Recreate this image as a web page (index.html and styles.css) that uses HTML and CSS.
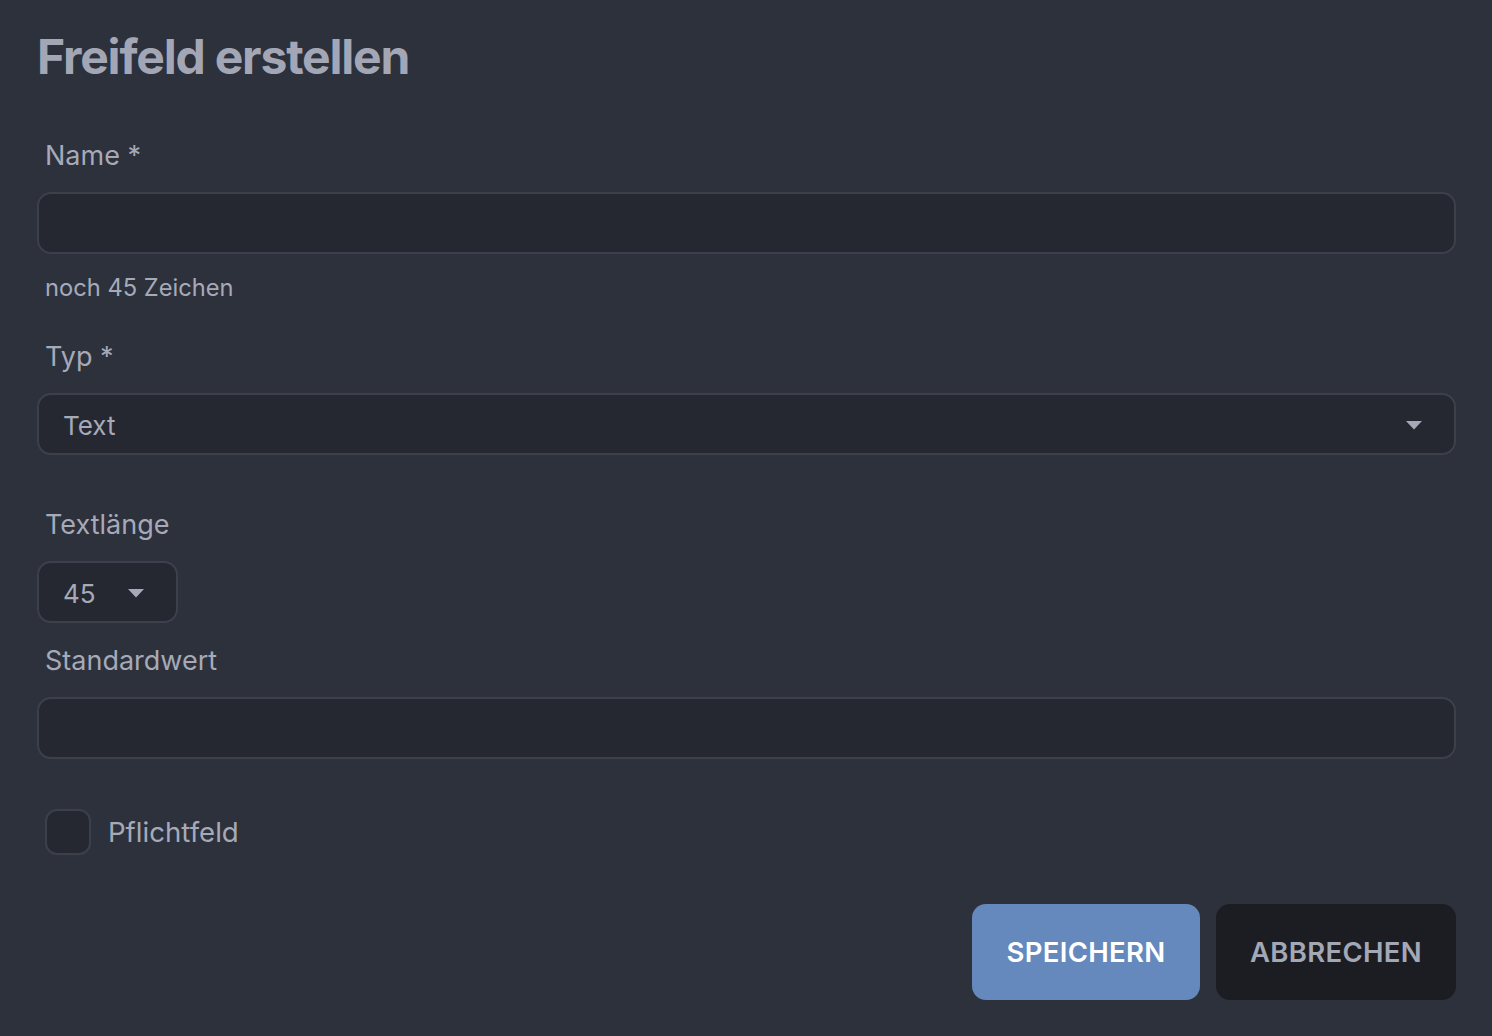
FILE: index.html
```html
<!DOCTYPE html>
<html lang="de">
<head>
<meta charset="utf-8">
<title>Freifeld erstellen</title>
<link rel="stylesheet" href="styles.css">
</head>
<body>
<main class="dialog">
  <h1 class="title">Freifeld erstellen</h1>

  <div class="field field-name">
    <label class="label">Name *</label>
    <div class="input"></div>
    <div class="helper">noch 45 Zeichen</div>
  </div>

  <div class="field field-typ">
    <label class="label">Typ *</label>
    <div class="input select">
      <span class="value">Text</span>
      <svg class="caret" width="16" height="9" viewBox="0 0 16 9"><path d="M0 0H16L8 8.5Z" fill="currentColor"/></svg>
    </div>
  </div>

  <div class="field field-len">
    <label class="label">Textlänge</label>
    <div class="input select small">
      <span class="value">45</span>
      <svg class="caret" width="16" height="9" viewBox="0 0 16 9"><path d="M0 0H16L8 8.5Z" fill="currentColor"/></svg>
    </div>
  </div>

  <div class="field field-std">
    <label class="label">Standardwert</label>
    <div class="input"></div>
  </div>

  <div class="check-row">
    <span class="checkbox"></span>
    <span class="check-label">Pflichtfeld</span>
  </div>

  <div class="actions">
    <button class="btn btn-primary">SPEICHERN</button>
    <button class="btn btn-secondary">ABBRECHEN</button>
  </div>
</main>
</body>
</html>
```
FILE: styles.css
```css
html, body {
  margin: 0;
  padding: 0;
  background: #2d313c;
}
body {
  font-family: Inter, "Noto Sans", "Liberation Sans", sans-serif;
  color: #a6aab8;
}
.dialog {
  padding: 28px 36px 0 37px;
}
.title {
  margin: 0;
  font-size: 48px;
  line-height: 58px;
  font-weight: 700;
  color: #a3a7b5;
  letter-spacing: -1.2px;
}
.field {
  display: flex;
  flex-direction: column;
}
.field-name { margin-top: 54px; }
.field-typ { margin-top: 39px; }
.field-len { margin-top: 54px; }
.field-std { margin-top: 22px; }
.label {
  display: block;
  padding-left: 8px;
  font-size: 27px;
  line-height: 32px;
  color: #a6aab8;
}
.input {
  margin-top: 20px;
  height: 62px;
  box-sizing: border-box;
  border: 2px solid #3c404c;
  border-radius: 14px;
  background: #252831;
}
.helper {
  margin-top: 20px;
  padding-left: 8px;
  font-size: 23.7px;
  line-height: 28px;
  color: #a6aab8;
}
.select {
  display: flex;
  align-items: center;
  justify-content: space-between;
  padding: 2px 32px 0 24px;
}
.select .value {
  font-size: 26px;
  color: #a6aab8;
}
.caret {
  color: #a6aab8;
  display: block;
}
.select.small {
  width: 141px;
  padding-right: 32px;
}
.check-row {
  margin-top: 50px;
  display: flex;
  align-items: center;
  gap: 17px;
  padding-left: 8px;
}
.checkbox {
  width: 46px;
  height: 46px;
  box-sizing: border-box;
  border: 2px solid #3c404c;
  border-radius: 12px;
  background: #252831;
}
.check-label {
  font-size: 27.6px;
  color: #a6aab8;
}
.actions {
  margin-top: 49px;
  display: flex;
  justify-content: flex-end;
  gap: 16px;
}
.btn {
  height: 96px;
  border: none;
  border-radius: 14px;
  font-family: Inter, "Noto Sans", "Liberation Sans", sans-serif;
  font-size: 27.5px;
  font-weight: 600;
  letter-spacing: 0.3px;
  padding: 0;
}
.btn-primary {
  width: 228px;
  background: #6589bd;
  color: #ffffff;
}
.btn-secondary {
  width: 240px;
  background: #1c1d22;
  color: #a3a8b6;
}
```
